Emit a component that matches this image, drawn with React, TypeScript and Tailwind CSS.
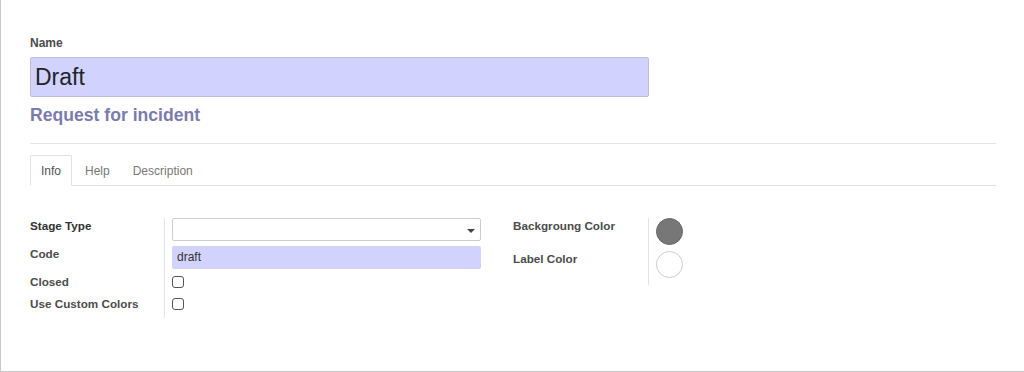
import React from 'react';

const Row: React.FC<{
  label: string;
  h: string;
  dark?: boolean;
  children: React.ReactNode;
}> = ({ label, h, dark, children }) => (
  <>
    <div className={`border-r border-[#e3e3e3] ${h}`}>
      <span
        className={`block text-[11.7px] font-bold leading-[16px] ${
          dark ? 'text-[#333]' : 'text-[#4c4c4c]'
        }`}
      >
        {label}
      </span>
    </div>
    <div className={`pl-[7px] ${h}`}>{children}</div>
  </>
);

const Checkbox: React.FC = () => (
  <div className="mt-[2px] h-[12px] w-[12px] rounded-[3px] border border-[#555] bg-white" />
);

const App: React.FC = () => {
  return (
    <div
      className="h-[372px] w-[1024px] border-b border-l border-[#c8c8c8] bg-white pr-[28px] pl-[29px] pt-[35px]"
      style={{ fontFamily: '"Liberation Sans", Arial, sans-serif' }}
    >
      {/* Titre */}
      <span className="block text-[12px] font-bold leading-[16px] text-[#4c4c4c]">
        Name
      </span>
      <div className="mt-[6px] h-[40px] w-[619px] rounded-[2px] border border-[#bdbde0] bg-[#d2d2ff] px-[4px] text-[23px] leading-[38px] text-[#212529]">
        Draft
      </div>
      <div className="mt-[7px] text-[17.6px] font-bold leading-[22px] text-[#7c7bad]">
        Request for incident
      </div>
      <div className="mt-[17px] h-px bg-[#e5e5e5]" />

      {/* Onglets */}
      <div className="mt-[11px] flex border-b border-[#dee2e6]">
        <div className="-mb-px h-[31px] rounded-t-[2px] border border-b-white border-[#dee2e6] bg-white px-[10px] pt-[2px] text-[12px] leading-[27px] text-[#555]">
          Info
        </div>
        <div className="-mb-px h-[31px] border border-transparent pr-[10px] pl-[12px] pt-[2px] text-[12px] leading-[27px] text-[#777]">
          Help
        </div>
        <div className="-mb-px h-[31px] border border-transparent px-[11px] pt-[2px] text-[12px] leading-[27px] text-[#777]">
          Description
        </div>
      </div>

      {/* Champs */}
      <div className="mt-[32px] flex items-start">
        <div className="grid w-[483px] grid-cols-[135px_1fr] pr-[32px]">
          <Row label="Stage Type" h="h-[28px]" dark>
            <div className="relative h-[23px] rounded-[2px] border border-[#ccc] bg-white">
              <span className="absolute top-[10px] right-[5px] h-0 w-0 border-x-[4px] border-t-[4px] border-x-transparent border-t-[#444]" />
            </div>
          </Row>
          <Row label="Code" h="h-[28px]">
            <div className="h-[23px] rounded-[2px] bg-[#d2d2ff] px-[5px] text-[12px] leading-[23px] text-[#333]">
              draft
            </div>
          </Row>
          <Row label="Closed" h="h-[22px]">
            <Checkbox />
          </Row>
          <Row label="Use Custom Colors" h="h-[22px]">
            <Checkbox />
          </Row>
        </div>
        <div className="grid w-[483px] grid-cols-[136px_1fr]">
          <Row label="Backgroung Color" h="h-[33px]">
            <div className="h-[27px] w-[27px] rounded-full border border-[#666] bg-[#777]" />
          </Row>
          <Row label="Label Color" h="h-[34px]">
            <div className="h-[27px] w-[27px] rounded-full border border-[#ccc] bg-white" />
          </Row>
        </div>
      </div>
    </div>
  );
};

export default App;
